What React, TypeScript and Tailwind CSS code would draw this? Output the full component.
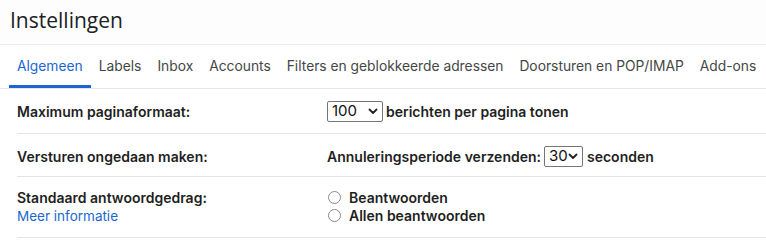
import React from 'react'

const tabs = ['Algemeen', 'Labels', 'Inbox', 'Accounts', 'Filters en geblokkeerde adressen', 'Doorsturen en POP/IMAP', 'Add-ons']

const Chevron: React.FC = () => (
  <svg width="10" height="7" viewBox="0 0 10 7" className="shrink-0">
    <path d="M1.5 1.5 L5 5 L8.5 1.5" fill="none" stroke="#222" strokeWidth="1.8" strokeLinecap="round" strokeLinejoin="round" />
  </svg>
)

const FakeSelect: React.FC<{ value: string; width: string }> = (props) => {
  return (
    <div
      className={`${props.width} h-[21px] shrink-0 flex items-center justify-between pl-[4px] pr-[4px] border border-[#767676] rounded-[2px] bg-white text-[15px] font-normal text-[#111]`}
    >
      <span>{props.value}</span>
      <Chevron />
    </div>
  )
}

const Radio: React.FC<{ label: string }> = (props) => (
  <div className="flex items-center h-[18px]">
    <span className="w-[13px] h-[13px] rounded-full border border-[#8a8a8a] bg-white mr-[8px] ml-[1px]" />
    <span>{props.label}</span>
  </div>
)

export default function App() {
  return (
    <div className="w-[766px] h-[242px] bg-white overflow-hidden text-[#202124]" style={{ fontFamily: 'Inter, Roboto, sans-serif' }}>
      <div className="h-[45px] pl-[10px] pt-[5px] border-b border-[#ececec] bg-[#fdfdfd]">
        <div className="text-[21px] leading-[30px] text-[#202124]" style={{ fontFamily: '"Open Sans", Roboto, sans-serif' }}>Instellingen</div>
      </div>
      <div className="flex pl-[9px] border-b border-[#e6e6e6] h-[44px] whitespace-nowrap">
        {tabs.map((t, i) => (
          <div
            key={i}
            className={`shrink-0 px-[8px] flex items-center text-[13.8px] ${i === 0 ? 'text-[#1a67d2] border-b-[3px] border-[#1a67d2] pt-[3px]' : 'text-[#444746]'}`}
          >
            {t}
          </div>
        ))}
      </div>
      <div className="ml-[17px] text-[14px] font-semibold text-[#1f1f1f] whitespace-nowrap">
        <div className="flex items-center h-[45px] border-b border-[#e4e4e4]">
          <div className="w-[310px] shrink-0">Maximum paginaformaat:</div>
          <FakeSelect value="100" width="w-[56px]" />
          <div className="ml-[3px]">berichten per pagina tonen</div>
        </div>
        <div className="flex items-center h-[43px] pt-[2px] border-b border-[#e4e4e4]">
          <div className="w-[310px] shrink-0">Versturen ongedaan maken:</div>
          <div className="mr-[3px]">Annuleringsperiode verzenden:</div>
          <FakeSelect value="30" width="w-[39px]" />
          <div className="ml-[4px]">seconden</div>
        </div>
        <div className="flex h-[61px] pt-[11px] border-b border-[#e4e4e4]">
          <div className="w-[310px] shrink-0">
            <div className="leading-[19px]">Standaard antwoordgedrag:</div>
            <div className="leading-[19px] text-[13.5px] font-normal text-[#1a67d2]">Meer informatie</div>
          </div>
          <div>
            <Radio label="Beantwoorden" />
            <Radio label="Allen beantwoorden" />
          </div>
        </div>
      </div>
    </div>
  )
}
